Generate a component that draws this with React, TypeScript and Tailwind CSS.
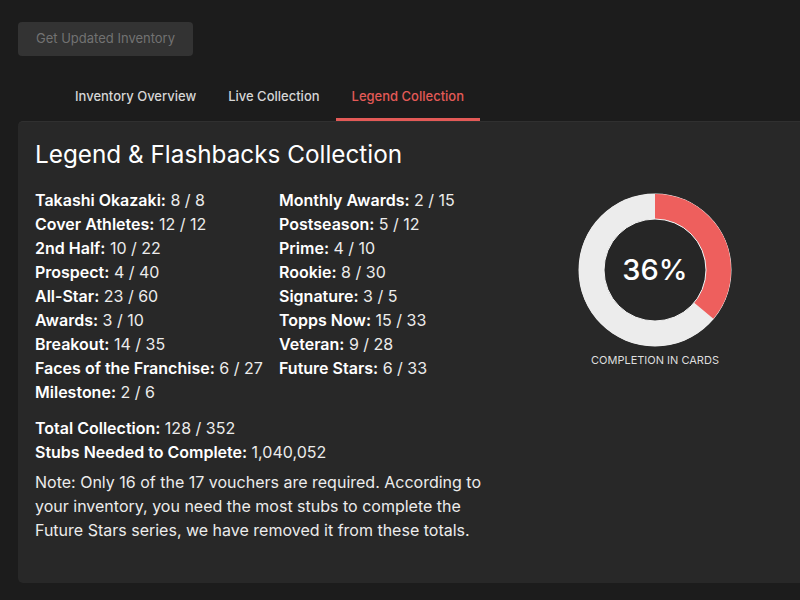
import React from 'react';

const left = [
  ['Takashi Okazaki', '8 / 8'],
  ['Cover Athletes', '12 / 12'],
  ['2nd Half', '10 / 22'],
  ['Prospect', '4 / 40'],
  ['All-Star', '23 / 60'],
  ['Awards', '3 / 10'],
  ['Breakout', '14 / 35'],
  ['Faces of the Franchise', '6 / 27'],
  ['Milestone', '2 / 6'],
];

const right = [
  ['Monthly Awards', '2 / 15'],
  ['Postseason', '5 / 12'],
  ['Prime', '4 / 10'],
  ['Rookie', '8 / 30'],
  ['Signature', '3 / 5'],
  ['Topps Now', '15 / 33'],
  ['Veteran', '9 / 28'],
  ['Future Stars', '6 / 33'],
];

function Stat({ label, value }: { label: string; value: string }) {
  return (
    <div className="leading-6">
      <span className="font-semibold text-white">{label}:</span> {value}
    </div>
  );
}

function Donut({ pct }: { pct: number }) {
  const r = 63.5;
  const c = 2 * Math.PI * r;
  return (
    <div className="flex flex-col items-center">
      <div className="relative h-[156px] w-[156px]">
        <svg width="156" height="156" viewBox="0 0 156 156">
          <circle cx="78" cy="78" r="76.5" fill="#f2f2f2" />
          <circle cx="78" cy="78" r={r} fill="none" stroke="#ececec" strokeWidth="25" />
          <circle
            cx="78"
            cy="78"
            r={r}
            fill="none"
            stroke="#ee5f5d"
            strokeWidth="25"
            strokeDasharray={`${(c * pct) / 100} ${c}`}
            transform="rotate(-90 78 78)"
          />
          <circle cx="78" cy="78" r="51" fill="#262626" stroke="#f4f4f4" strokeWidth="1" />
        </svg>
        <div className="absolute inset-0 flex items-center justify-center text-[29px] font-medium text-white">
          {pct}%
        </div>
      </div>
      <div className="mt-[4px] text-[11px] uppercase text-[#dedede]">Completion in Cards</div>
    </div>
  );
}

export default function App() {
  return (
    <div className="min-h-screen overflow-hidden bg-[#1c1c1c] pl-[18px] pt-[22px] font-['Inter','Liberation_Sans',sans-serif] text-[#ececec]">
      <button
        type="button"
        className="h-[34px] rounded-[4px] bg-[#333333] px-[18px] text-[13px] text-[#727272]"
      >
        Get Updated Inventory
      </button>

      <div className="mt-[22px] ml-[41px] flex text-[13px] font-medium">
        <div className="border-b-[3px] border-transparent px-4 pt-2 pb-3 leading-5 text-[#d6d6d6]">Inventory Overview</div>
        <div className="border-b-[3px] border-transparent px-4 pt-2 pb-3 leading-5 text-[#d6d6d6]">Live Collection</div>
        <div className="border-b-[3px] border-[#e35a57] px-4 pt-2 pb-3 leading-5 text-[#e35a57]">Legend Collection</div>
      </div>

      <div className="h-[462px] w-[800px] rounded-[5px] border-t border-[#303030] bg-[#282828] px-[17px] pt-4">
        <div className="flex">
          <div className="w-[470px]">
            <h1 className="text-[24.3px] leading-8 text-white">Legend &amp; Flashbacks Collection</h1>
            <div className="mt-[18px] grid grid-cols-[244px_1fr] text-base">
              <div>
                {left.map(([l, v]) => (
                  <Stat key={l} label={l} value={v} />
                ))}
              </div>
              <div>
                {right.map(([l, v]) => (
                  <Stat key={l} label={l} value={v} />
                ))}
              </div>
            </div>
            <div className="mt-3 text-base">
              <Stat label="Total Collection" value="128 / 352" />
              <Stat label="Stubs Needed to Complete" value="1,040,052" />
            </div>
            <p className="mt-[6px] w-[462px] text-base leading-6">
              Note: Only 16 of the 17 vouchers are required. According to your inventory, you need the most stubs to
              complete the Future Stars series, we have removed it from these totals.
            </p>
          </div>
          <div className="ml-[72px] pt-[54px]">
            <Donut pct={36} />
          </div>
        </div>
      </div>
    </div>
  );
}
